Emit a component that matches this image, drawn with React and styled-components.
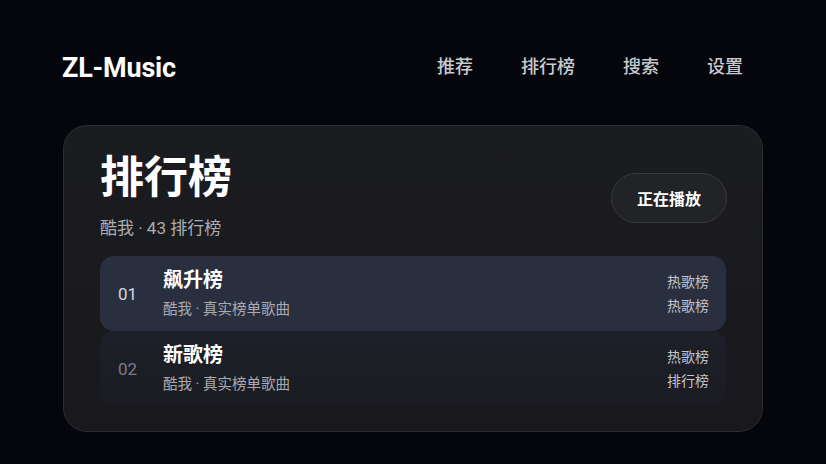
import React from "react";
import styled, { createGlobalStyle } from "styled-components";

const GlobalStyle = createGlobalStyle`
  html, body {
    margin: 0;
    padding: 0;
    background: #05060b;
  }
  body {
    font-family: Roboto, "Noto Sans CJK SC", sans-serif;
    color: #f2f3f5;
    -webkit-font-smoothing: antialiased;
  }
  * {
    box-sizing: border-box;
  }
`;

const charts = [
  { id: "01", name: "飙升榜", desc: "酷我 · 真实榜单歌曲", tags: ["热歌榜", "热歌榜"], active: true },
  { id: "02", name: "新歌榜", desc: "酷我 · 真实榜单歌曲", tags: ["热歌榜", "排行榜"], active: false },
];

export default function App() {
  return (
    <>
      <GlobalStyle />
      <Page>
        <Header>
          <Logo>ZL-Music</Logo>
          <Nav>
            <NavLink>推荐</NavLink>
            <NavLink>排行榜</NavLink>
            <NavLink>搜索</NavLink>
            <NavLink>设置</NavLink>
          </Nav>
        </Header>

        <Card>
          <CardHead>
            <div>
              <Title>排行榜</Title>
              <Subtitle>酷我 · 43 排行榜</Subtitle>
            </div>
            <PlayingButton>正在播放</PlayingButton>
          </CardHead>

          <List>
            {charts.map((chart) => (
              <Row key={chart.id} active={chart.active}>
                <Index active={chart.active}>{chart.id}</Index>
                <Info>
                  <ChartName>{chart.name}</ChartName>
                  <ChartDesc>{chart.desc}</ChartDesc>
                </Info>
                <Tags>
                  {chart.tags.map((t, i) => (
                    <span key={i}>{t}</span>
                  ))}
                </Tags>
              </Row>
            ))}
          </List>
        </Card>
      </Page>
    </>
  );
}

const Page = styled.div`
  width: 700px;
  margin: 0 auto;
  padding-top: 44px;
`;

const Header = styled.header`
  display: flex;
  align-items: center;
  justify-content: space-between;
  height: 48px;
  margin-bottom: 33px;
`;

const Logo = styled.div`
  font-size: 27px;
  font-weight: 700;
  color: #ffffff;
  letter-spacing: -0.2px;
  margin-left: -1px;
`;

const Nav = styled.nav`
  display: flex;
  align-items: center;
  gap: 8px;
  margin-bottom: 6px;
`;

const NavLink = styled.a`
  padding: 10px 20px;
  font-size: 18px;
  font-weight: 500;
  color: #c9cad0;
  cursor: pointer;
`;

const Card = styled.section`
  border-radius: 24px;
  border: 1px solid #2c2d33;
  background: linear-gradient(180deg, #1b1c20 0%, #19191d 100%);
  padding: 28px 36px 25px 36px;
`;

const CardHead = styled.div`
  display: flex;
  align-items: center;
  justify-content: space-between;
  margin-bottom: 16px;
`;

const Title = styled.h1`
  margin: 0;
  font-size: 44px;
  font-weight: 700;
  line-height: 48px;
  color: #ffffff;
`;

const Subtitle = styled.div`
  margin-top: 14px;
  font-size: 17px;
  line-height: 24px;
  color: #abadb3;
`;

const PlayingButton = styled.button`
  height: 50px;
  margin-top: 2px;
  padding: 0 25px;
  border-radius: 25px;
  border: 1px solid #38393f;
  background: #222327;
  color: #ffffff;
  font-family: inherit;
  font-size: 16px;
  font-weight: 700;
  margin-right: -1px;
`;

const List = styled.div`
  display: flex;
  flex-direction: column;
  height: 150px;
  overflow: hidden;
`;

const Row = styled.div`
  display: flex;
  align-items: center;
  height: 75px;
  flex-shrink: 0;
  padding: 0 17px 0 18px;
  border-radius: 14px;
  background: ${(p) =>
    p.active
      ? "#2a2f3f"
      : "linear-gradient(180deg, rgba(34,38,52,0.5) 0%, rgba(28,31,42,0.4) 100%)"};
`;

const Index = styled.div`
  width: 45px;
  font-size: 17px;
  color: ${(p) => (p.active ? "#d6d8de" : "#7b7e88")};
`;

const Info = styled.div`
  flex: 1;
  display: flex;
  flex-direction: column;
`;

const ChartName = styled.div`
  font-size: 20px;
  font-weight: 700;
  line-height: 26px;
  color: #ffffff;
`;

const ChartDesc = styled.div`
  margin-top: 7px;
  font-size: 14.5px;
  line-height: 20px;
  color: #a9abb2;
`;

const Tags = styled.div`
  display: flex;
  flex-direction: column;
  align-items: flex-end;
  gap: 4px;
  font-size: 14px;
  line-height: 20px;
  color: #c3c5cc;
`;
